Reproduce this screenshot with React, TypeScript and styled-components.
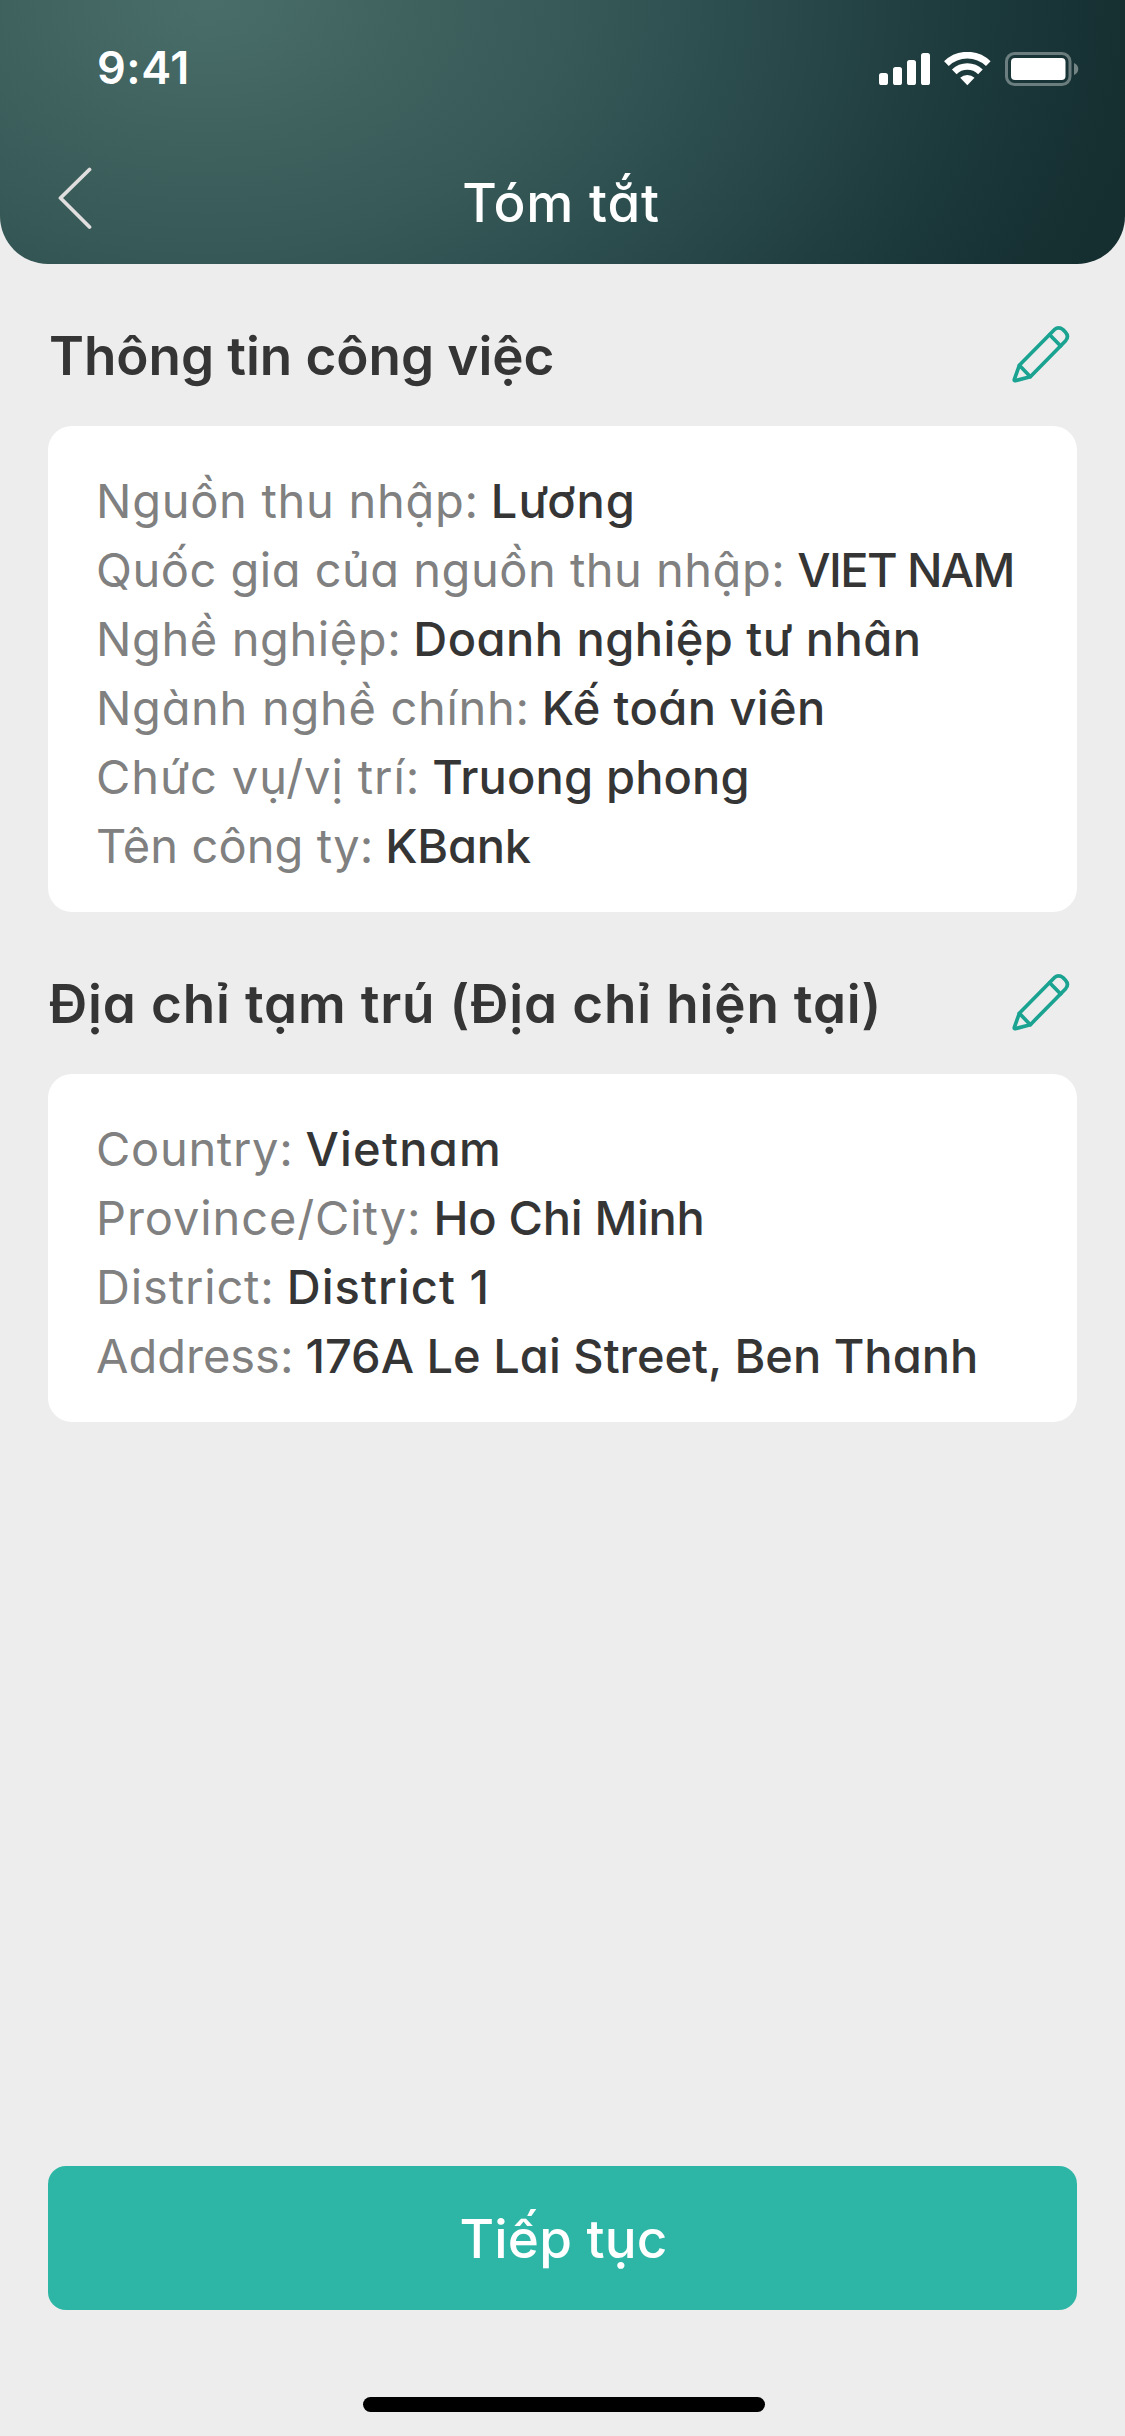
import React from "react";
import styled, { createGlobalStyle } from "styled-components";

const GlobalStyle = createGlobalStyle`
  * { box-sizing: border-box; }
  body {
    margin: 0;
    background: #ededed;
    font-family: Inter, "Noto Sans", sans-serif;
    font-feature-settings: "cv11" 1;
  }
`;

const Screen = styled.div`
  display: flex;
  flex-direction: column;
  width: 1125px;
  height: 2436px;
  background: #ededed;
  overflow: hidden;
`;

const Header = styled.header`
  height: 264px;
  flex: none;
  border-radius: 0 0 48px 48px;
  color: #fff;
  background: radial-gradient(
    950px 655px at 208px 0,
    #496e69 0%,
    #40625f 21%,
    #375957 38%,
    #2f5151 50%,
    #264546 66%,
    #1b383a 82%,
    #152e30 100%
  );
`;

const StatusBar = styled.div`
  display: flex;
  align-items: center;
  justify-content: space-between;
  height: 138px;
  padding: 0 46px 0 97px;
`;

const Clock = styled.time`
  font-size: 45px;
  font-weight: 600;
  line-height: 54px;
  letter-spacing: 0.5px;
  padding-bottom: 3px;
`;

const StatusIcons = styled.div`
  display: flex;
  align-items: center;
  gap: 14px;
  svg { display: block; }
`;

const NavBar = styled.div`
  display: grid;
  grid-template-columns: 1fr auto 1fr;
  align-items: center;
  height: 126px;
  padding: 0 56px;
`;

const BackButton = styled.button`
  justify-self: start;
  border: 0;
  padding: 0 0 6px;
  background: none;
  svg { display: block; }
`;

const Title = styled.h1`
  margin: 0;
  padding: 3px 3px 0 0;
  font-size: 53px;
  font-weight: 550;
  line-height: 64px;
  letter-spacing: 0.8px;
`;

const Content = styled.main`
  flex: 1;
  padding: 0 48px;
`;

const SectionHeader = styled.div`
  display: flex;
  align-items: center;
  justify-content: space-between;
  height: 162px;
  padding: 22px 7px 0 0;
`;

const SectionTitle = styled.h2<{ $tracking: number }>`
  margin: 0;
  padding-left: 1px;
  font-size: 53px;
  font-weight: 600;
  line-height: 64px;
  letter-spacing: ${(p) => p.$tracking}px;
  white-space: nowrap;
  color: #353535;
`;

const EditButton = styled.button`
  border: 0;
  padding: 0 0 4px;
  background: none;
  svg { display: block; }
`;

const Card = styled.div`
  padding: 40px 40px 32px 48px;
  border-radius: 24px;
  background: #fff;
`;

const Row = styled.div`
  display: flex;
  gap: 12px;
  font-size: 47px;
  line-height: 69px;
  white-space: nowrap;
`;

const Label = styled.span<{ $tracking: number }>`
  color: #808080;
  letter-spacing: ${(p) => p.$tracking}px;
`;

const Value = styled.span<{ $tracking: number }>`
  color: #353535;
  font-weight: 500;
  letter-spacing: ${(p) => p.$tracking}px;
`;

const Footer = styled.footer`
  display: flex;
  flex-direction: column;
  align-items: center;
  padding: 0 48px 24px;
`;

const PrimaryButton = styled.button`
  width: 100%;
  height: 144px;
  margin-bottom: 87px;
  padding: 2px 0 0 2px;
  border: 0;
  border-radius: 18px;
  background: #2db6a5;
  color: #fff;
  font-family: inherit;
  font-feature-settings: inherit;
  font-size: 53px;
  font-weight: 550;
  letter-spacing: 0.2px;
`;

const HomeIndicator = styled.div`
  width: 402px;
  height: 15px;
  margin-left: 3px;
  border-radius: 8px;
  background: #000;
`;

const SignalIcon = () => (
  <svg width="51" height="32" viewBox="0 0 51 32" fill="#fff">
    <rect x="0" y="20" width="9" height="12" rx="2.6" />
    <rect x="14" y="14" width="9" height="18" rx="2.6" />
    <rect x="28" y="7" width="9" height="25" rx="2.6" />
    <rect x="42" y="0" width="9" height="32" rx="2.6" />
  </svg>
);

const WifiIcon = () => (
  <svg width="46.7" height="33.3" viewBox="-70 -100 140 100" fill="none">
    <path d="M-62.9-65.1A90.5 90.5 0 0 1 62.9-65.1M-39.3-40.6A56.5 56.5 0 0 1 39.3-40.6" stroke="#fff" strokeWidth="20" />
    <path d="M0 0L-21.5-22.3A31 31 0 0 1 21.5-22.3Z" fill="#fff" />
  </svg>
);

const BatteryIcon = () => (
  <svg width="74" height="34" viewBox="0 0 74 34">
    <rect x="1.5" y="1.5" width="63.5" height="31" rx="8" fill="none" stroke="#fff" strokeOpacity="0.36" strokeWidth="3" />
    <path d="M69 11V23C71.5 22 73.3 19.7 73.3 17S71.5 12 69 11Z" fill="#fff" fillOpacity="0.4" />
    <rect x="6" y="6" width="54.5" height="22" rx="4" fill="#fff" />
  </svg>
);

const ChevronIcon = () => (
  <svg width="36" height="64" viewBox="0 0 36 64" fill="none">
    <path d="M33.5 3.5L4.5 32L33.5 61" stroke="#e0dede" strokeWidth="3.8" strokeLinecap="round" strokeLinejoin="round" />
  </svg>
);

const PencilIcon = () => (
  <svg width="58" height="58" viewBox="36 44 174 174" fill="none" stroke="#1aa391" strokeWidth="11" strokeLinejoin="round" strokeLinecap="round">
    <path d="M58 165L163 58Q176 47 189 58L196 65Q208 78 197 91L91 199L46 211Q42 212 43 207Z" />
    <path d="M58 165L91 199M149 73L182 107" />
  </svg>
);

interface Field {
  label: string;
  value: string;
  labelTracking: number;
  valueTracking: number;
}

interface SectionData {
  title: string;
  tracking: number;
  fields: Field[];
}

const sections: SectionData[] = [
  {
    title: "Thông tin công việc",
    tracking: -0.05,
    fields: [
      { label: "Nguồn thu nhập:", value: "Lương", labelTracking: 0.72, valueTracking: 1 },
      { label: "Quốc gia của nguồn thu nhập:", value: "VIET NAM", labelTracking: 0.5, valueTracking: -1.6 },
      { label: "Nghề nghiệp:", value: "Doanh nghiệp tư nhân", labelTracking: 0.6, valueTracking: 0.44 },
      { label: "Ngành nghề chính:", value: "Kế toán viên", labelTracking: 0.7, valueTracking: 0.4 },
      { label: "Chức vụ/vị trí:", value: "Truong phong", labelTracking: 0.9, valueTracking: 0.15 },
      { label: "Tên công ty:", value: "KBank", labelTracking: 0.1, valueTracking: -0.3 },
    ],
  },
  {
    title: "Địa chỉ tạm trú (Địa chỉ hiện tại)",
    tracking: 0.85,
    fields: [
      { label: "Country:", value: "Vietnam", labelTracking: 0.7, valueTracking: 1.25 },
      { label: "Province/City:", value: "Ho Chi Minh", labelTracking: 0.9, valueTracking: -0.3 },
      { label: "District:", value: "District 1", labelTracking: 0.85, valueTracking: 1.05 },
      { label: "Address:", value: "176A Le Lai Street, Ben Thanh", labelTracking: 0, valueTracking: 0 },
    ],
  },
];

const Section = ({ title, tracking, fields }: SectionData) => (
  <section>
    <SectionHeader>
      <SectionTitle $tracking={tracking}>{title}</SectionTitle>
      <EditButton>
        <PencilIcon />
      </EditButton>
    </SectionHeader>
    <Card>
      {fields.map((f) => (
        <Row key={f.label}>
          <Label $tracking={f.labelTracking}>{f.label}</Label>
          <Value $tracking={f.valueTracking}>{f.value}</Value>
        </Row>
      ))}
    </Card>
  </section>
);

export default function App() {
  return (
    <Screen>
      <GlobalStyle />
      <Header>
        <StatusBar>
          <Clock>9:41</Clock>
          <StatusIcons>
            <SignalIcon />
            <WifiIcon />
            <BatteryIcon />
          </StatusIcons>
        </StatusBar>
        <NavBar>
          <BackButton>
            <ChevronIcon />
          </BackButton>
          <Title>Tóm tắt</Title>
        </NavBar>
      </Header>
      <Content>
        {sections.map((s) => (
          <Section key={s.title} {...s} />
        ))}
      </Content>
      <Footer>
        <PrimaryButton>Tiếp tục</PrimaryButton>
        <HomeIndicator />
      </Footer>
    </Screen>
  );
}
